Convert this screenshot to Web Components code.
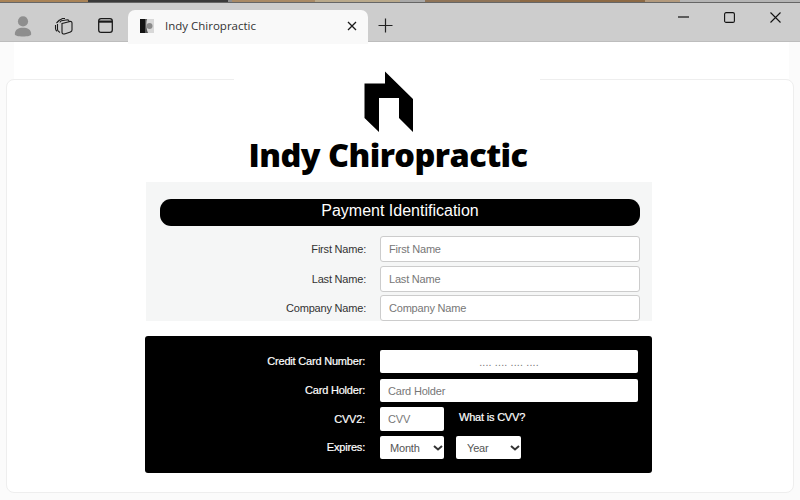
<!doctype html>
<html><head><meta charset="utf-8">
<style>
html,body{margin:0;padding:0;width:800px;height:500px;overflow:hidden;background:#fff}
body{font-family:"Liberation Sans",Arial,sans-serif}
</style></head><body>
<browser-window>
  <page-card>
    <brand-logo></brand-logo>
    <form-panel heading="Payment Identification">
      <form-row label="First Name:" style="margin-bottom:4px"><text-box placeholder="First Name"></text-box></form-row>
      <form-row label="Last Name:"><text-box placeholder="Last Name"></text-box></form-row>
      <form-row label="Company Name:"><text-box placeholder="Company Name"></text-box></form-row>
    </form-panel>
    <form-panel dark>
      <form-row dark label="Credit Card Number:" style="height:23px;"><text-box dark center placeholder=".... .... .... ...."></text-box></form-row>
      <form-row dark label="Card Holder:" style="height:23px;margin-top:6px"><text-box dark placeholder="Card Holder"></text-box></form-row>
      <form-row dark tall label="CVV2:" style="height:24px;margin-top:5px">
        <div style="display:flex;gap:15px"><text-box dark placeholder="CVV" style="width:64px;flex:none;height:24px"></text-box><span style="color:#fff;font-size:11px;letter-spacing:-.2px;line-height:20px;-webkit-text-stroke:.2px #fff">What is CVV?</span></div>
      </form-row>
      <form-row dark label="Expires:" style="height:23px;margin-top:5px">
        <div style="display:flex;gap:12px"><pick-box label="Month" style="width:64px"></pick-box><pick-box label="Year" pad="11" style="width:65px"></pick-box></div>
      </form-row>
    </form-panel>
  </page-card>
</browser-window>
<script>
function def(name,html){
  customElements.define(name,class extends HTMLElement{
    connectedCallback(){
      if(this.shadowRoot)return;
      const r=this.attachShadow({mode:'open'});
      r.innerHTML=typeof html==='function'?html(this):html;
    }
  });
}
const S='fill="none" stroke="#1a1a1a" stroke-width="1.1"';
def('browser-window',`
<style>
:host{display:flex;flex-direction:column;width:800px;height:500px;background:#fff}
.strip{height:2px;flex:none;background:linear-gradient(90deg,#a98357 0 88px,#3a3a3a 88px 228px,#8d8d8d 228px 232px,#a98a66 232px 315px,#b9a98b 315px 400px,#a9a9a9 400px 425px,#8f7458 425px 520px,#8d6a45 520px 645px,#b39a7d 645px 680px,#b5b5b5 680px 800px);border-bottom:1px solid #666;box-sizing:content-box}
.bar{height:38px;flex:none;background:#cdcdcd;display:flex;border-bottom:1px solid #bdbdbd;position:relative}
.left{width:128px;flex:none;display:flex;align-items:center;padding-top:7px;box-sizing:border-box}
.ic{display:flex;justify-content:center;align-items:center}
.tab{width:240px;flex:none;margin-top:7px;height:34px;background:#f9f9f9;border-radius:7px 7px 0 0;display:flex;align-items:center;font:11.5px "Open Sans","Noto Sans",sans-serif;color:#333;padding:0 11px 3px 12px;box-sizing:border-box}
.fav{width:14px;height:14px;flex:none;margin-right:11px;display:block}
.title{flex:1}
.plus{width:34px;flex:none;display:flex;align-items:center;justify-content:center;padding-top:7px}
.sp{flex:1}
.wc{display:flex;padding-right:2px;align-items:flex-start}
.wc div{width:46px;height:28px;display:flex;align-items:center;justify-content:center}
.content{flex:1;background:#fbfbfb;display:flex;flex-direction:column;min-height:0;padding:0 6px 7px}
.top{height:37px;flex:none;margin:0 5px 0 8px;background:#fff}
slot{display:block}
.wrap{flex:1;min-height:0;display:flex;flex-direction:column}
</style>
<div class="strip"></div>
<div class="bar">
  <div class="left">
    <div class="ic" style="width:46px"><svg width="20" height="22" viewBox="0 0 22 24"><circle cx="11" cy="7" r="5.6" fill="#8e8e8e"/><path d="M2 21c0-5 4-7 9-7s9 2 9 7c0 1.500-4 2.500-9 2.500S2 22.500 2 21z" fill="#8e8e8e"/></svg></div>
    <div class="ic" style="width:36px"><svg width="20" height="18" viewBox="0 0 20 18" ${S}><path d="M5 3.500 8.500 1.500 11 1.500M2.500 6 5.500 3M1.500 8v3.500c0 1 .5 2 1.500 2.800M3.500 7v5.500c0 1.200 1 2.200 2.500 3"/><path d="M6 5.500c0-1 .6-1.500 1.500-1.800L13.500 2.800c1 0 1.500.5 1.500 1.500v0M8 6.500l8-2c1.200-.3 2 .3 2 1.500v7c0 1-.5 1.600-1.500 1.900l-6 2c-1.200.3-2.500-.2-2.500-1.600z"/></svg></div>
    <div class="ic" style="width:46px"><svg width="15" height="15" viewBox="0 0 15 15" fill="none" stroke="#1a1a1a"><rect x=".7" y=".7" width="13.600" height="13.600" rx="2.400" stroke-width="1.300"/><path d="M1 3.600h13" stroke-width="2.200"/></svg></div>
  </div>
  <div class="tab"><svg class="fav" viewBox="0 0 14 14"><rect width="14" height="14" fill="#d8d8d8"/><rect width="5" height="14" fill="#111"/><path d="M5 0h2c-1 3-1 9 1 14H5z" fill="#555"/><circle cx="9.500" cy="7" r="3" fill="#8a8a8a"/></svg><span class="title">Indy Chiropractic</span>
    <svg width="10" height="10" viewBox="0 0 10 10" stroke="#1a1a1a" stroke-width="1.300"><path d="M1 1l8 8M9 1l-8 8"/></svg></div>
  <div class="plus"><svg width="15" height="15" viewBox="0 0 15 15" stroke="#222" stroke-width="1.200"><path d="M7.500 .5v14M.5 7.500h14"/></svg></div>
  <div class="sp"></div>
  <div class="wc">
    <div><svg width="11" height="2" viewBox="0 0 11 2"><path d="M0 1h11" stroke="#111" stroke-width="1.200"/></svg></div>
    <div><svg width="11" height="11" viewBox="0 0 11 11"><rect x=".6" y=".6" width="9.800" height="9.800" rx="1.500" fill="none" stroke="#111" stroke-width="1.100"/></svg></div>
    <div><svg width="11" height="11" viewBox="0 0 11 11" stroke="#111" stroke-width="1.100"><path d="M.5.500l10 10M10.500.500l-10 10"/></svg></div>
  </div>
</div>
<div class="content"><div class="top"></div><div class="wrap"><slot></slot></div></div>`);

def('page-card',`
<style>
:host{display:flex;flex-direction:column;align-items:flex-start;flex:1;height:414px;box-sizing:border-box;background:#fff;border:1px solid #eee;border-radius:8px;padding:0 0 0 138px;position:relative}
</style><slot></slot>`);

def('brand-logo',`
<style>
:host{display:flex;flex-direction:column;align-items:center;width:507px;height:111px;box-sizing:border-box;margin-top:-9px;position:relative;flex:none}
.cap{position:absolute;left:89px;width:306px;top:8px;height:3px;background:#fff}
svg{display:block;position:relative;margin:0 20px 0 0}
span{font:800 32.5px/40px "Open Sans",Lato,sans-serif;letter-spacing:-.56px;color:#000;display:block;margin:2px 21px 0 0;white-space:nowrap;position:relative}
</style>
<div class="cap"></div>
<svg width="50" height="62" viewBox="0 0 50 62"><path d="M.5 12.500H21V.5L49 28V61L35 47V27H15V61L.5 47z" fill="#000"/></svg>
<span>Indy Chiropractic</span>`);

def('form-panel',h=>{
  const dark=h.hasAttribute('dark'), head=h.getAttribute('heading');
  return `<style>
:host{display:block;width:${dark?507:506}px;box-sizing:border-box;flex:none;margin-left:${dark?0:1}px;
${dark?'background:#000;border-radius:3px;height:137px;padding:14px 14px 0 0;margin-top:15px':'background:#f5f6f6;height:139px;padding:17px 12px 0 14px;overflow:hidden'}}
h2{margin:0 0 10px;height:27px;background:#000;border-radius:11px;color:#fff;font:400 16px/24px "Liberation Sans",Arial,sans-serif;text-align:center}
</style>${head?`<h2>${head}</h2>`:''}<slot></slot>`;
});

def('form-row',h=>{
  const dark=h.hasAttribute('dark'), tall=h.hasAttribute('tall');
  return `<style>
:host{display:grid;grid-template-columns:${dark?'220px':'206px'} 1fr;column-gap:${dark?'15px':'14px'};align-items:start;height:26px;margin-bottom:${dark?0:3}px}
label{font-size:11px;letter-spacing:-.2px;line-height:${dark?(tall?'24px':'23px'):'26px'};text-align:right;color:${dark?'#fff':'#333'};${dark?'-webkit-text-stroke:.2px #fff;':''}white-space:nowrap}
</style><label>${h.getAttribute('label')}</label><slot></slot>`;
});

def('text-box',h=>{
  const dark=h.hasAttribute('dark'), c=h.hasAttribute('center');
  return `<style>
:host{display:block;min-width:0}
input{display:block;width:100%;height:${dark?'100%':'26px'};min-height:23px;box-sizing:border-box;border:${dark?'0':'1px solid #ccc'};border-radius:${dark?2:3}px;background:#fff;padding:0 8px;font:11px "Liberation Sans",Arial,sans-serif;letter-spacing:-.2px;color:#555;outline:0;text-align:${c?'center':'left'}}
input::placeholder{color:#777;opacity:1;${c?'letter-spacing:.2px;font-size:10.6px;':''}}
</style><input placeholder="${h.getAttribute('placeholder')}">`;
});

def('pick-box',h=>`<style>
:host{display:block;position:relative;height:23px}
select{display:block;width:100%;height:23px;appearance:none;-webkit-appearance:none;border:0;border-radius:2px;background:#fff;padding:0 0 0 ${h.getAttribute('pad')||10}px;font:11px "Liberation Sans",Arial,sans-serif;letter-spacing:-.2px;color:#555;margin:0;outline:0}
svg{position:absolute;right:1px;top:9px;pointer-events:none}
</style><select><option>${h.getAttribute('label')}</option></select>
<svg width="10" height="6" viewBox="0 0 10 6"><path d="M1 1l4 3.500L9 1" fill="none" stroke="#333" stroke-width="2"/></svg>`);
</script>
</body></html>
